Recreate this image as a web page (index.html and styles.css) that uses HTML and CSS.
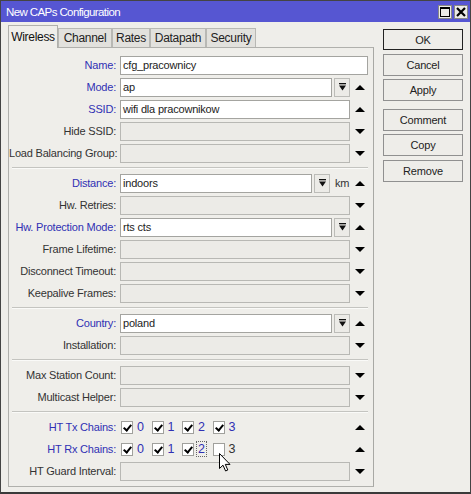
FILE: index.html
```html
<!DOCTYPE html>
<html>
<head>
<meta charset="utf-8">
<link rel="stylesheet" href="styles.css">
</head>
<body>
<div class="window">
  <div class="titlebar">
    <span class="title">New CAPs Configuration</span>
    <div class="tbtns">
      <span class="tbtn"><svg width="10" height="10" viewBox="0 0 10 10"><rect x="0.5" y="0.5" width="9" height="9" fill="none" stroke="#000"/><rect x="0" y="0" width="10" height="2" fill="#000"/></svg></span>
      <span class="tbtn"><svg width="10" height="10" viewBox="0 0 10 10"><path d="M1 1 L9 9 M9 1 L1 9" stroke="#000" stroke-width="2.2"/></svg></span>
    </div>
  </div>
  <div class="main">
    <div class="left">
      <div class="tabs">
        <div class="tab active t1">Wireless</div>
        <div class="tab t2">Channel</div>
        <div class="tab t3">Rates</div>
        <div class="tab t4">Datapath</div>
        <div class="tab t5">Security</div>
      </div>
      <div class="panel">
        <div class="row"><span class="lbl blue">Name:</span><span class="field full">cfg_pracownicy</span></div>
        <div class="row"><span class="lbl blue">Mode:</span><span class="field">ap</span><span class="dd"><svg width="7" height="8" viewBox="0 0 7 8"><rect x="0" y="0" width="7" height="1.3" fill="#111"/><path d="M0 2.5 H7 L3.5 7.5 Z" fill="#111"/></svg></span><span class="arr up"></span></div>
        <div class="row"><span class="lbl blue">SSID:</span><span class="field">wifi dla pracownikow</span><span class="arr up"></span></div>
        <div class="row"><span class="lbl">Hide SSID:</span><span class="field off"></span><span class="arr down"></span></div>
        <div class="row"><span class="lbl">Load Balancing Group:</span><span class="field off"></span><span class="arr down"></span></div>
        <div class="sep"></div>
        <div class="row"><span class="lbl blue">Distance:</span><span class="field">indoors</span><span class="dd"><svg width="7" height="8" viewBox="0 0 7 8"><rect x="0" y="0" width="7" height="1.3" fill="#111"/><path d="M0 2.5 H7 L3.5 7.5 Z" fill="#111"/></svg></span><span class="unit">km</span><span class="arr up"></span></div>
        <div class="row"><span class="lbl">Hw. Retries:</span><span class="field off"></span><span class="arr down"></span></div>
        <div class="row"><span class="lbl blue">Hw. Protection Mode:</span><span class="field">rts cts</span><span class="dd"><svg width="7" height="8" viewBox="0 0 7 8"><rect x="0" y="0" width="7" height="1.3" fill="#111"/><path d="M0 2.5 H7 L3.5 7.5 Z" fill="#111"/></svg></span><span class="arr up"></span></div>
        <div class="row"><span class="lbl">Frame Lifetime:</span><span class="field off"></span><span class="arr down"></span></div>
        <div class="row"><span class="lbl">Disconnect Timeout:</span><span class="field off"></span><span class="arr down"></span></div>
        <div class="row"><span class="lbl">Keepalive Frames:</span><span class="field off"></span><span class="arr down"></span></div>
        <div class="sep"></div>
        <div class="row"><span class="lbl blue">Country:</span><span class="field">poland</span><span class="dd"><svg width="7" height="8" viewBox="0 0 7 8"><rect x="0" y="0" width="7" height="1.3" fill="#111"/><path d="M0 2.5 H7 L3.5 7.5 Z" fill="#111"/></svg></span><span class="arr up"></span></div>
        <div class="row"><span class="lbl">Installation:</span><span class="field off"></span><span class="arr down"></span></div>
        <div class="sep"></div>
        <div class="row"><span class="lbl">Max Station Count:</span><span class="field off"></span><span class="arr down"></span></div>
        <div class="row"><span class="lbl">Multicast Helper:</span><span class="field off"></span><span class="arr down"></span></div>
        <div class="sep"></div>
        <div class="row"><span class="lbl blue">HT Tx Chains:</span>
          <div class="checks">
            <span class="chk"><span class="box on"></span><span class="cl blue">0</span></span>
            <span class="chk"><span class="box on"></span><span class="cl blue">1</span></span>
            <span class="chk"><span class="box on"></span><span class="cl blue">2</span></span>
            <span class="chk"><span class="box on"></span><span class="cl blue">3</span></span>
          </div><span class="arr up"></span></div>
        <div class="row"><span class="lbl blue">HT Rx Chains:</span>
          <div class="checks">
            <span class="chk"><span class="box on"></span><span class="cl blue">0</span></span>
            <span class="chk"><span class="box on"></span><span class="cl blue">1</span></span>
            <span class="chk"><span class="box on"></span><span class="cl blue focus">2</span></span>
            <span class="chk"><span class="box"></span><span class="cl">3</span></span>
          </div><span class="arr up"></span></div>
        <div class="row"><span class="lbl">HT Guard Interval:</span><span class="field off"></span><span class="arr down"></span></div>
        <svg class="cursor" width="12" height="19" viewBox="0 0 12 19"><path d="M0.5 0.5 V15.5 L4 12.2 L6.6 18 L8.8 17 L6.3 11.4 H11 Z" fill="#fff" stroke="#000" stroke-width="1"/></svg>
      </div>
    </div>
    <div class="right">
      <div class="btn def">OK</div>
      <div class="btn">Cancel</div>
      <div class="btn">Apply</div>
      <div class="btn gap">Comment</div>
      <div class="btn">Copy</div>
      <div class="btn">Remove</div>
    </div>
  </div>
</div>
</body>
</html>
```
FILE: styles.css
```css
html, body {
  margin: 0;
  padding: 0;
  background: #3a3a3a;
}
.window {
  width: 469px;
  height: 491px;
  border: 1px solid #444;
  border-bottom: 2px solid #3a3a3a;
  background: #efeeea;
  font-family: "Liberation Sans", Arial, sans-serif;
  font-size: 11px;
  letter-spacing: -0.2px;
  color: #333;
  overflow: hidden;
}
.titlebar {
  height: 21px;
  background: #5656d2;
  display: flex;
  align-items: center;
  justify-content: space-between;
  padding: 0 2px 0 5px;
}
.title {
  color: #fff;
  font-size: 11.5px;
  letter-spacing: -0.6px;
}
.tbtns {
  display: flex;
  gap: 2px;
}
.tbtn {
  width: 14px;
  height: 14px;
  background: #ecebe7;
  border: 1px solid #888;
  box-sizing: border-box;
  display: flex;
  align-items: center;
  justify-content: center;
}
.main {
  display: flex;
  padding: 0 0 0 7px;
}
.left {
  width: 366px;
  display: flex;
  flex-direction: column;
}
.tabs {
  display: flex;
  height: 25px;
  align-items: flex-end;
}
.tab {
  height: 19px;
  line-height: 18px;
  text-align: center;
  background: #e2e1dd;
  border: 1px solid #b8b8b4;
  border-bottom: none;
  box-sizing: border-box;
  color: #222;
  font-size: 12px;
  letter-spacing: -0.3px;
}
.t1 { width: 50px; }
.t2 { width: 54px; }
.t3 { width: 38px; }
.t4 { width: 56px; }
.t5 { width: 50px; }
.tab.active {
  height: 23px;
  line-height: 22px;
  background: #efeeea;
  border-color: #b0b0ac;
  margin-bottom: -1px;
  position: relative;
  z-index: 1;
  color: #111;
}
.panel {
  position: relative;
  border: 1px solid #b0b0ac;
  border-right-color: #a8a8a4;
  padding: 6px 0 6px 0;
  height: 440px;
  box-sizing: border-box;
}
.row {
  display: flex;
  align-items: center;
  height: 22px;
}
.lbl {
  width: 107px;
  text-align: right;
  margin-right: 4px;
  white-space: nowrap;
  flex: none;
  color: #333;
}
.blue {
  color: #3030b4;
}
.field {
  flex: 1;
  height: 19px;
  box-sizing: border-box;
  background: #fff;
  border: 1px solid #a4a4a0;
  line-height: 17px;
  padding-left: 2px;
  color: #222;
  white-space: nowrap;
}
.field.full {
  margin-right: 5px;
}
.field.off {
  background: #ecebe7;
  border-color: #b8b8b4;
}
.dd {
  width: 16px;
  height: 19px;
  box-sizing: border-box;
  border: 1px solid #bcbcb8;
  background: #ecebe7;
  margin-left: 2px;
  display: flex;
  align-items: center;
  justify-content: center;
  flex: none;
}
.unit {
  width: 20px;
  padding-left: 5px;
  box-sizing: border-box;
  flex: none;
  color: #333;
}
.arr {
  width: 23px;
  flex: none;
  display: flex;
  justify-content: center;
  padding-right: 3px;
  box-sizing: border-box;
}
.arr::before {
  content: "";
  width: 0;
  height: 0;
  border-left: 5px solid transparent;
  border-right: 5px solid transparent;
}
.arr.up::before {
  border-bottom: 5px solid #000;
}
.arr.down::before {
  border-top: 5px solid #000;
}
.sep {
  height: 8px;
  margin: 0 5px 0 3px;
  display: flex;
  align-items: center;
}
.sep::before {
  content: "";
  flex: 1;
  height: 0;
  border-top: 1px solid #c4c4c0;
  border-bottom: 1px solid #fafaf8;
}
.checks {
  flex: 1;
  display: flex;
  align-items: center;
}
.chk {
  width: 30.5px;
  display: flex;
  align-items: center;
  flex: none;
}
.box {
  width: 12px;
  height: 13px;
  box-sizing: border-box;
  border: 1px solid #a0a09c;
  background: #fff;
  position: relative;
  margin-left: 1px;
}
.box.on::after {
  content: "";
  position: absolute;
  left: 3px;
  top: 1px;
  width: 3px;
  height: 6px;
  border-right: 2px solid #000;
  border-bottom: 2px solid #000;
  transform: rotate(40deg);
}
.cl {
  margin-left: 2px;
  font-size: 12.5px;
  padding: 0 1px;
  line-height: 14px;
  border: 1px solid transparent;
}
.cl.focus {
  border: 1px dotted #666;
}
.cursor {
  position: absolute;
  left: 210px;
  top: 405px;
}
.right {
  display: flex;
  flex-direction: column;
  margin-left: 9px;
  padding-top: 7px;
}
.btn {
  width: 80px;
  height: 22px;
  box-sizing: border-box;
  border: 1px solid #909090;
  background: #eeede9;
  text-align: center;
  line-height: 20px;
  margin-bottom: 3.5px;
  color: #222;
}
.btn.def {
  border: 1px solid #222;
  height: 21px;
}
.btn.gap {
  margin-top: 4px;
}
```
